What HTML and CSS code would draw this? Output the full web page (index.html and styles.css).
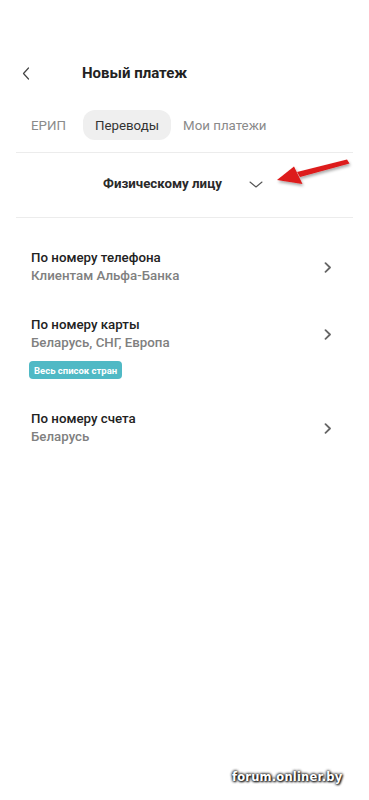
FILE: index.html
```html
<!DOCTYPE html>
<html lang="ru">
<head>
<meta charset="utf-8">
<title>Новый платеж</title>
<link rel="stylesheet" href="styles.css">
</head>
<body>
<div class="screen">
  <header class="header">
    <button class="back" aria-label="Назад">
      <svg width="8" height="13" viewBox="0 0 8 13"><path d="M6.5 1 L1.5 6.5 L6.5 12" fill="none" stroke="#444" stroke-width="1.2" stroke-linecap="round" stroke-linejoin="round"/></svg>
    </button>
    <h1 class="title">Новый платеж</h1>
  </header>

  <nav class="tabs">
    <span class="tab tab-first">ЕРИП</span>
    <span class="tab tab-active">Переводы</span>
    <span class="tab">Мои платежи</span>
  </nav>

  <div class="divider"></div>

  <div class="dropdown">
    <span class="dropdown-label">Физическому лицу</span>
    <svg class="dropdown-chevron" width="14" height="7" viewBox="0 0 14 7"><path d="M1 1 L7 6 L13 1" fill="none" stroke="#555" stroke-width="1.1" stroke-linecap="round" stroke-linejoin="round"/></svg>
  </div>

  <div class="divider"></div>

  <ul class="list">
    <li class="row">
      <div class="row-main">
        <div class="row-text">
          <div class="row-title">По номеру телефона</div>
          <div class="row-sub">Клиентам Альфа-Банка</div>
        </div>
        <svg class="row-chevron" width="8" height="11" viewBox="0 0 8 11"><path d="M1.5 1.2 L6 5.5 L1.5 9.8" fill="none" stroke="#666" stroke-width="1.8" stroke-linecap="round" stroke-linejoin="round"/></svg>
      </div>
    </li>
    <li class="row">
      <div class="row-main">
        <div class="row-text">
          <div class="row-title">По номеру карты</div>
          <div class="row-sub">Беларусь, СНГ, Европа</div>
        </div>
        <svg class="row-chevron" width="8" height="11" viewBox="0 0 8 11"><path d="M1.5 1.2 L6 5.5 L1.5 9.8" fill="none" stroke="#666" stroke-width="1.8" stroke-linecap="round" stroke-linejoin="round"/></svg>
      </div>
      <span class="badge">Весь список стран</span>
    </li>
    <li class="row">
      <div class="row-main">
        <div class="row-text">
          <div class="row-title">По номеру счета</div>
          <div class="row-sub">Беларусь</div>
        </div>
        <svg class="row-chevron" width="8" height="11" viewBox="0 0 8 11"><path d="M1.5 1.2 L6 5.5 L1.5 9.8" fill="none" stroke="#666" stroke-width="1.8" stroke-linecap="round" stroke-linejoin="round"/></svg>
      </div>
    </li>
  </ul>

  <svg class="annotation" width="369" height="220" viewBox="0 0 369 220">
    <defs>
      <filter id="sh" x="-20%" y="-50%" width="140%" height="200%">
        <feDropShadow dx="1" dy="2" stdDeviation="1.5" flood-color="#000" flood-opacity="0.35"/>
      </filter>
    </defs>
    <g filter="url(#sh)" fill="#dd1a1a">
      <path d="M347 159.5 L349.5 163.5 L300 177 L297 172 Z"/>
      <path d="M277 180 L294 166.5 L302.5 184 Z"/>
    </g>
  </svg>

  <div class="watermark">forum.onliner.by</div>
</div>
</body>
</html>
```
FILE: styles.css
```css
* { box-sizing: border-box; }
html, body { margin: 0; padding: 0; background: #fff; }
body {
  font-family: Roboto, "Noto Sans", "Liberation Sans", sans-serif;
  color: #222;
}
.screen {
  position: relative;
  width: 369px;
  height: 800px;
  overflow: hidden;
  background: #fff;
}
.header {
  display: flex;
  align-items: center;
  height: 26px;
  margin-top: 60px;
  padding-left: 21px;
}
.back {
  display: flex;
  align-items: center;
  justify-content: center;
  width: 10px;
  height: 26px;
  padding: 0;
  border: 0;
  background: none;
}
.title {
  margin: 0 0 0 51px;
  font-size: 15px;
  font-weight: 700;
  color: #222;
  line-height: 26px;
}
.tabs {
  display: flex;
  align-items: center;
  margin-top: 24px;
  padding-left: 19px;
  height: 30px;
}
.tab {
  display: flex;
  align-items: center;
  height: 30px;
  padding: 0 12px;
  font-size: 13.3px;
  color: #8a8a8a;
}
.tab-first { margin-right: 5px; }
.tab-active {
  background: #efefef;
  border-radius: 12px;
  color: #333;
}
.divider {
  height: 1px;
  margin: 12px 16px 0;
  background: #ececec;
}
.dropdown + .divider { margin-top: 0; }
.dropdown {
  display: flex;
  align-items: center;
  justify-content: center;
  gap: 27px;
  height: 64px;
  padding-right: 3px;
  padding-bottom: 4px;
}
.dropdown-label {
  font-size: 13.3px;
  font-weight: 700;
  color: #2a2a2a;
}
.dropdown-chevron { margin-top: 2px; }
.list {
  list-style: none;
  margin: 0;
  padding: 31px 0 0 31px;
  display: flex;
  flex-direction: column;
  gap: 31px;
}
.row {
  display: flex;
  flex-direction: column;
  align-items: flex-start;
  gap: 9px;
}
.row-main {
  display: flex;
  align-items: center;
  justify-content: space-between;
  width: 100%;
  padding-right: 37px;
}
.row-title {
  font-size: 13.3px;
  font-weight: 500;
  line-height: 18px;
  color: #222;
}
.row-sub {
  font-size: 13.3px;
  font-weight: 500;
  line-height: 18px;
  color: #808080;
}
.row-chevron { margin-top: 1px; }
.badge {
  display: inline-flex;
  align-items: center;
  height: 18px;
  padding: 0 5px;
  margin-left: -2px;
  border-radius: 4px;
  background: #50b9c5;
  color: #fff;
  font-size: 9.5px;
  font-weight: 700;
}
.annotation {
  position: absolute;
  left: 0;
  top: 0;
  pointer-events: none;
}
.watermark {
  position: absolute;
  left: 232px;
  top: 768px;
  font-family: "DejaVu Sans", Verdana, sans-serif;
  font-weight: 700;
  font-size: 11.5px;
  line-height: 18px;
  color: #fff;
  text-shadow: 0 0 3px #000, 0 0 3px #000, 1px 1px 2px #333;
  letter-spacing: 0.2px;
}
```
